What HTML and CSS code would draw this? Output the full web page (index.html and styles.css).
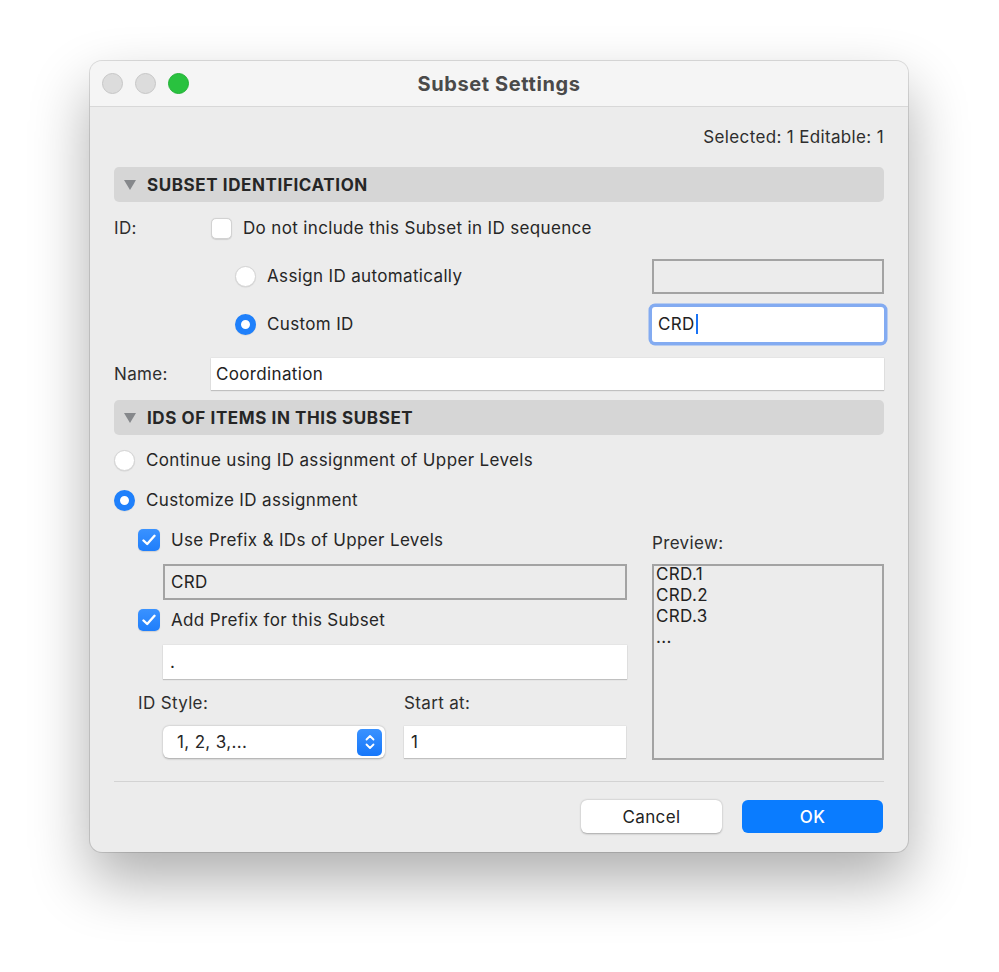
FILE: index.html
```html
<!DOCTYPE html>
<html lang="en">

<head>
    <meta charset="UTF-8">
    <meta name="viewport" content="width=device-width, initial-scale=1.0">
    <link rel="stylesheet" href="styles.css">
    <title>Subset Settings</title>
</head>

<body>
    <div class="window">
        <div class="titlebar">
            <div class="lights">
                <span class="light"></span>
                <span class="light"></span>
                <span class="light green"></span>
            </div>
            <div class="title">Subset Settings</div>
            <div></div>
        </div>

        <div class="content">
            <div class="meta">Selected: 1 Editable: 1</div>

            <div class="section">
                <svg class="tri" width="12" height="10" viewBox="0 0 12 10"><path d="M0 0H12L6 10Z" fill="#86888b"/></svg>
                <span>SUBSET IDENTIFICATION</span>
            </div>

            <div class="row idrow">
                <div class="label">ID:</div>
                <span class="check"></span>
                <span class="text">Do not include this Subset in ID sequence</span>
            </div>

            <div class="row indent">
                <div class="grow">
                    <span class="radio"></span>
                    <span class="text">Assign ID automatically</span>
                </div>
                <div class="field disabled idfield"></div>
            </div>

            <div class="row indent">
                <div class="grow">
                    <span class="radio on"></span>
                    <span class="text">Custom ID</span>
                </div>
                <div class="field focus idfield">CRD<span class="caret"></span></div>
            </div>

            <div class="row name">
                <div class="label">Name:</div>
                <div class="field namefield">Coordination</div>
            </div>

            <div class="section second">
                <svg class="tri" width="12" height="10" viewBox="0 0 12 10"><path d="M0 0H12L6 10Z" fill="#86888b"/></svg>
                <span>IDS OF ITEMS IN THIS SUBSET</span>
            </div>

            <div class="radiorow">
                <span class="radio"></span>
                <span class="text">Continue using ID assignment of Upper Levels</span>
            </div>
            <div class="radiorow">
                <span class="radio on"></span>
                <span class="text">Customize ID assignment</span>
            </div>

            <div class="lower">
                <div class="left">
                    <div class="checkrow">
                        <span class="check on"><svg width="14" height="12" viewBox="0 0 14 12"><path d="M1.5 6.5L5.2 10L12.5 1.8" fill="none" stroke="#fff" stroke-width="2.4" stroke-linecap="round" stroke-linejoin="round"/></svg></span>
                        <span class="text">Use Prefix &amp; IDs of Upper Levels</span>
                    </div>
                    <div class="field disabled prefix">CRD</div>
                    <div class="checkrow">
                        <span class="check on"><svg width="14" height="12" viewBox="0 0 14 12"><path d="M1.5 6.5L5.2 10L12.5 1.8" fill="none" stroke="#fff" stroke-width="2.4" stroke-linecap="round" stroke-linejoin="round"/></svg></span>
                        <span class="text">Add Prefix for this Subset</span>
                    </div>
                    <div class="field prefix own">.</div>

                    <div class="pair">
                        <div>
                            <div class="sublabel">ID Style:</div>
                            <div class="popup">
                                <span>1, 2, 3,...</span>
                                <span class="stepper">
                                    <svg width="12" height="18" viewBox="0 0 12 18"><path d="M2.5 6.5L6 3L9.5 6.5M2.5 11.5L6 15L9.5 11.5" fill="none" stroke="#fff" stroke-width="1.8" stroke-linecap="round" stroke-linejoin="round"/></svg>
                                </span>
                            </div>
                        </div>
                        <div>
                            <div class="sublabel">Start at:</div>
                            <div class="field start">1</div>
                        </div>
                    </div>
                </div>

                <div class="right">
                    <div class="sublabel preview-label">Preview:</div>
                    <div class="preview">
                        <div>CRD.1</div>
                        <div>CRD.2</div>
                        <div>CRD.3</div>
                        <div>...</div>
                    </div>
                </div>
            </div>

            <div class="separator"></div>

            <div class="buttons">
                <div class="button">Cancel</div>
                <div class="button primary">OK</div>
            </div>
        </div>
    </div>
</body>

</html>
```

FILE: styles.css
```css
html {
    background-color: #ffffff;
}

body {
    margin: 0;
    min-height: 972px;
    padding-top: 61px;
    box-sizing: border-box;
    font-family: Inter, "Noto Sans", sans-serif;
    font-size: 17px;
    letter-spacing: 0.35px;
    color: #262626;
}

.window {
    margin-left: 90px;
    width: 818px;
    height: 791px;
    border-radius: 12px;
    background-color: #ececec;
    box-shadow: 0 28px 60px rgba(0, 0, 0, 0.32), 0 0 0 1px rgba(0, 0, 0, 0.12);
    overflow: hidden;
}

.titlebar {
    height: 45px;
    display: grid;
    grid-template-columns: 1fr auto 1fr;
    align-items: center;
    background-color: #f5f5f5;
    border-bottom: 1px solid #d8d8d8;
}

.lights {
    display: flex;
    gap: 12px;
    padding-left: 12px;
}

.light {
    width: 19px;
    height: 19px;
    border-radius: 50%;
    background-color: #dcdcdc;
    border: 0.5px solid #c6c6c6;
}

.light.green {
    background-color: #29c23f;
    border-color: #22b036;
}

.title {
    font-size: 20px;
    font-weight: 700;
    letter-spacing: 0.6px;
    color: #4a4a4a;
}

.content {
    padding: 0 24px;
}

.meta {
    height: 60px;
    display: flex;
    align-items: center;
    justify-content: flex-end;
    color: #2e2e2e;
}

.section {
    height: 35px;
    display: flex;
    align-items: center;
    gap: 11px;
    padding-left: 10px;
    border-radius: 5px;
    background-color: #d6d6d6;
    font-weight: 700;
    color: #262626;
    letter-spacing: 0.6px;
}

.section.second {
    margin-top: 2px;
}

.row {
    height: 48px;
    display: flex;
    align-items: center;
}

.row.idrow {
    margin-top: 2px;
}

.row.indent {
    padding-left: 121px;
}

.row.name {
    margin-top: 2px;
}

.label {
    width: 97px;
    color: #2e2e2e;
}

.grow {
    flex: 1;
    display: flex;
    align-items: center;
}

.text {
    margin-left: 11px;
}

.check {
    width: 21px;
    height: 21px;
    box-sizing: border-box;
    border-radius: 5px;
    background-color: #ffffff;
    border: 1px solid #d2d2d2;
    box-shadow: 0 0.5px 1px rgba(0, 0, 0, 0.12);
    display: flex;
    align-items: center;
    justify-content: center;
}

.check.on {
    width: 22px;
    height: 22px;
    border: none;
    background: linear-gradient(#3a92ff, #1f7efb);
}

.radio {
    width: 21px;
    height: 21px;
    box-sizing: border-box;
    border-radius: 50%;
    background-color: #ffffff;
    border: 1px solid #d4d4d4;
    box-shadow: 0 0.5px 1px rgba(0, 0, 0, 0.1);
    flex: none;
}

.radio.on {
    border: 6.5px solid #1f80fb;
    background-color: #ffffff;
}

.field {
    box-sizing: border-box;
    background-color: #ffffff;
    box-shadow: 0 1px 1px rgba(0, 0, 0, 0.16), 0 0 0 0.5px rgba(0, 0, 0, 0.06);
    display: flex;
    align-items: center;
    padding-left: 7px;
    color: #222;
}

.field.disabled {
    background-color: #ececec;
    border: 2px solid #a3a3a3;
    box-shadow: none;
    padding-left: 6px;
}

.idfield {
    width: 232px;
    height: 35px;
}

.field.focus {
    height: 35px;
    border-radius: 3px;
    box-shadow: 0 0 0 3.5px #83abf1;
    padding-left: 6px;
}

.caret {
    width: 2px;
    height: 20px;
    margin-left: 1px;
    background-color: #1a73f5;
}

.namefield {
    flex: 1;
    height: 32px;
    padding-left: 5px;
}

.radiorow {
    height: 40px;
    display: flex;
    align-items: center;
}

.section.second + .radiorow {
    margin-top: 5px;
}

.lower {
    display: flex;
    justify-content: space-between;
    padding-left: 24px;
}

.left {
    width: 489px;
}

.checkrow {
    height: 40px;
    display: flex;
    align-items: center;
}

.prefix {
    margin-left: 25px;
    width: 464px;
}

.field.disabled.prefix {
    height: 36px;
    margin-top: 4px;
}

.prefix.own {
    height: 34px;
    margin-top: 5px;
}

.pair {
    display: grid;
    grid-template-columns: 247px 222px;
    column-gap: 19px;
    margin-top: 6px;
}

.sublabel {
    height: 36px;
    display: flex;
    align-items: center;
    color: #2e2e2e;
}

.popup {
    margin-top: 5px;
    margin-left: 25px;
    width: 222px;
    height: 32px;
    box-sizing: border-box;
    border-radius: 6px;
    background-color: #ffffff;
    box-shadow: 0 0.5px 2px rgba(0, 0, 0, 0.3);
    display: flex;
    align-items: center;
    justify-content: space-between;
    padding: 0 3px 0 14px;
}

.stepper {
    width: 25px;
    height: 27px;
    border-radius: 5px;
    background: linear-gradient(#3a92ff, #1677fa);
    display: flex;
    align-items: center;
    justify-content: center;
}

.field.start {
    margin-top: 5px;
    height: 32px;
    padding-left: 7px;
}

.right {
    width: 232px;
}

.preview-label {
    margin-top: 4px;
    height: 38px;
}

.preview {
    margin-top: 2px;
    height: 196px;
    box-sizing: border-box;
    border: 2px solid #a3a3a3;
    padding: 0 2px;
    line-height: 21px;
    color: #222;
}

.preview div:first-child {
    margin-top: -2px;
}

.separator {
    margin-top: 21px;
    height: 1px;
    background-color: #d3d3d3;
}

.buttons {
    margin-top: 18px;
    display: flex;
    justify-content: flex-end;
    gap: 20px;
    padding-right: 1px;
}

.button {
    width: 141px;
    height: 33px;
    border-radius: 6px;
    background-color: #ffffff;
    box-shadow: 0 0.5px 2px rgba(0, 0, 0, 0.3);
    display: flex;
    align-items: center;
    justify-content: center;
    color: #222;
}

.button.primary {
    background-color: #0a7cff;
    box-shadow: none;
    color: #ffffff;
    font-weight: 500;
}
```
